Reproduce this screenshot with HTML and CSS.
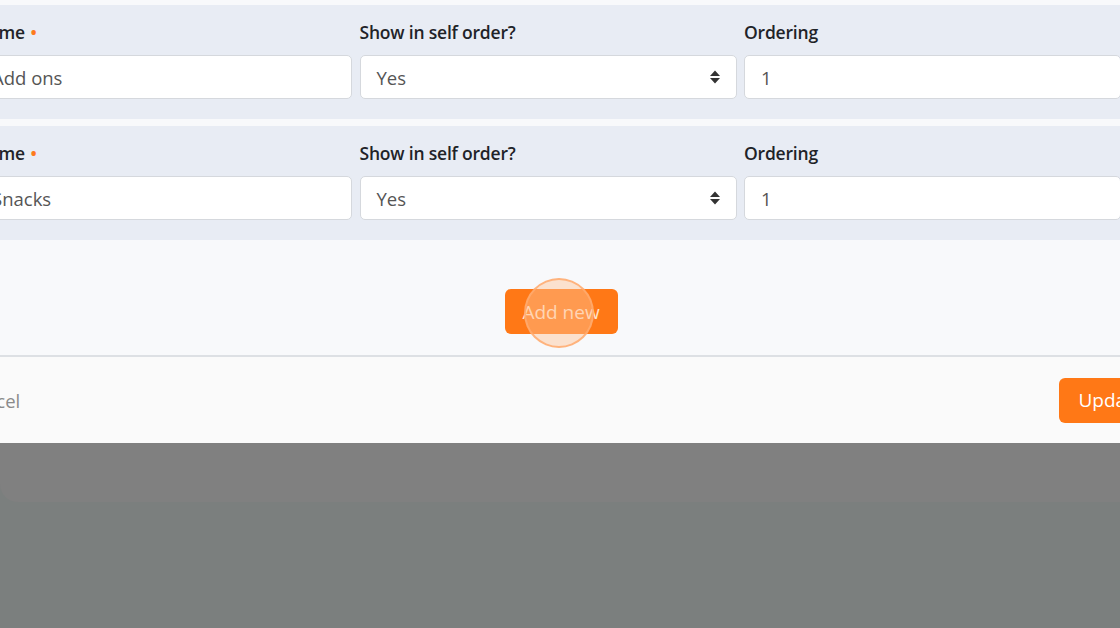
FILE: index.html
```html
<!DOCTYPE html>
<html lang="en">
<head>
  <meta charset="UTF-8" />
  <meta name="viewport" content="width=device-width, initial-scale=1.0"/>
  <title>Edit categories</title>
  <link rel="stylesheet" href="styles.css">
</head>
<body>
  <div class="card-behind">
    <div class="modal">
      <div class="rows">
        <div class="row-panel">
          <div class="field">
            <label class="label">Name <span class="req">•</span></label>
            <input class="input" type="text" value="Add ons">
          </div>
          <div class="field">
            <label class="label">Show in self order?</label>
            <div class="select">
              <span>Yes</span>
              <svg class="caret" width="12" height="16" viewBox="0 0 12 16"><path d="M6 1.5 L11 7 H1 Z M6 14.5 L1 9 H11 Z" fill="#333"/></svg>
            </div>
          </div>
          <div class="field">
            <label class="label">Ordering</label>
            <input class="input" type="text" value="1">
          </div>
        </div>
        <div class="row-panel">
          <div class="field">
            <label class="label">Name <span class="req">•</span></label>
            <input class="input" type="text" value="Snacks">
          </div>
          <div class="field">
            <label class="label">Show in self order?</label>
            <div class="select">
              <span>Yes</span>
              <svg class="caret" width="12" height="16" viewBox="0 0 12 16"><path d="M6 1.5 L11 7 H1 Z M6 14.5 L1 9 H11 Z" fill="#333"/></svg>
            </div>
          </div>
          <div class="field">
            <label class="label">Ordering</label>
            <input class="input" type="text" value="1">
          </div>
        </div>
      </div>

      <div class="add-area">
        <div class="add-wrap">
          <button class="btn btn-orange btn-add">Add new</button>
          <span class="click-ring"></span>
        </div>
      </div>

      <div class="modal-footer">
        <button class="btn btn-link">Cancel</button>
        <button class="btn btn-orange btn-update">Update</button>
      </div>
    </div>
  </div>
</body>
</html>
```

FILE: styles.css
```css
html, body {
  margin: 0;
  height: 100%;
}
body {
  font-family: "Open Sans", "Liberation Sans", sans-serif;
  background: linear-gradient(#707478 0, #767a7c 40px, #7b7f7e 126px);
  overflow: hidden;
}
.card-behind {
  background: #808080;
  padding-bottom: 59px;
  border-bottom-left-radius: 18px;
  overflow: hidden;
}
.modal {
  width: 1220px;
  margin-left: -40px;
  background: #f8f9fb;
}
.rows {
  padding-top: 5px;
  display: flex;
  flex-direction: column;
  gap: 7px;
}
.row-panel {
  background: #e8ecf4;
  padding: 15px 15px 20px;
  display: grid;
  grid-template-columns: repeat(3, 377px);
  column-gap: 7.5px;
}
.field {
  display: flex;
  flex-direction: column;
}
.label {
  font-size: 17.5px;
  font-weight: 600;
  color: #1f2328;
  line-height: 24px;
  margin-bottom: 11px;
  letter-spacing: -0.2px;
}
.req {
  color: #fd7a1c;
  font-size: 18px;
  margin-left: 1px;
}
.input, .select {
  box-sizing: border-box;
  height: 44px;
  border: 1px solid #d5d8dd;
  border-radius: 5px;
  background: #fff;
  padding: 0 16px;
  font-family: inherit;
  font-size: 18.5px;
  color: #555;
  outline: none;
  width: 100%;
}
.select {
  display: flex;
  align-items: center;
  justify-content: space-between;
  padding-right: 15px;
}
.caret {
  display: block;
}
.add-area {
  display: flex;
  justify-content: center;
  padding: 49px 18px 21px 0;
  border-bottom: 2px solid #dde0e4;
}
.add-wrap {
  position: relative;
}
.btn {
  font-family: inherit;
  font-size: 18px;
  border: none;
  border-radius: 6px;
  height: 45px;
  cursor: pointer;
}
.btn-orange {
  background: #ff7816;
  color: #fff;
}
.btn-add {
  width: 113px;
  font-size: 19px;
  color: #ffe3cc;
}
.click-ring {
  position: absolute;
  left: 50%;
  top: 50%;
  width: 70px;
  height: 70px;
  margin: -34px 0 0 -37px;
  border-radius: 50%;
  background: rgba(255, 196, 150, 0.45);
  border: 2px solid rgba(255, 170, 110, 0.85);
  box-sizing: border-box;
}
.modal-footer {
  background: #fafafa;
  height: 86px;
  display: flex;
  align-items: center;
  justify-content: space-between;
  padding: 0 17px 0 0;
}
.btn-link {
  background: none;
  color: #8a8a8a;
  padding: 0 3px;
  font-size: 18.5px;
}
.btn-update {
  width: 104px;
  font-size: 19px;
}
```
